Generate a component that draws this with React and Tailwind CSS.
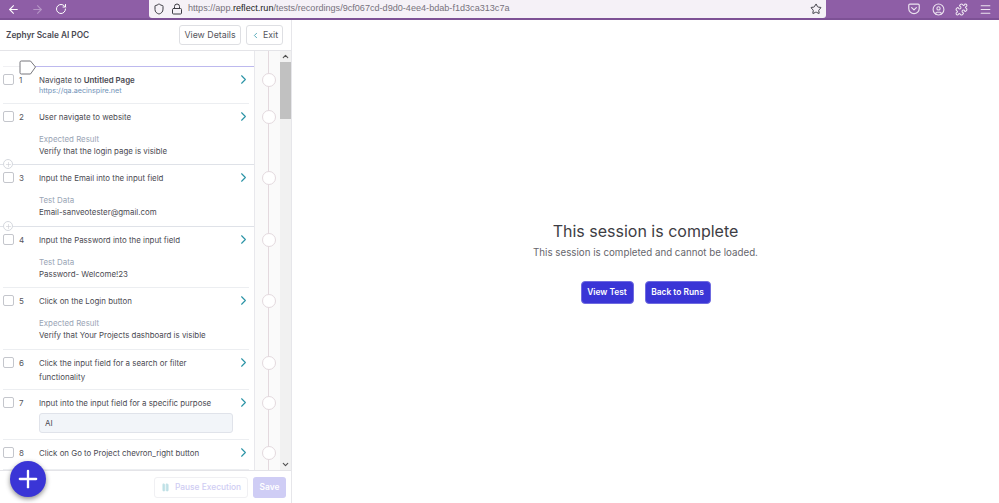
import React from 'react';
import { ArrowLeft, ArrowRight, RotateCw, Shield, Lock, Star, CircleUser, Puzzle, Menu, ChevronRight, ChevronLeft, ChevronUp, ChevronDown, Pause, Plus } from 'lucide-react';

const PocketIcon = () => (
  <svg width="14" height="14" viewBox="0 0 24 24" fill="none" stroke="currentColor" strokeWidth="2" strokeLinecap="round" strokeLinejoin="round">
    <path d="M3 5.5C3 4.4 3.9 3.5 5 3.5h14c1.1 0 2 .9 2 2V11a9 9 0 0 1-18 0z" />
    <path d="M8 9.5l4 4 4-4" />
  </svg>
);

const Timeline = ({ height }) => (
  <div className="relative w-[26px] shrink-0 bg-[#fafafa] border-l border-[#e8e8ec]">
    <div className="absolute left-[13px] top-0 bottom-0 w-px bg-[#e3d9de]" />
    <div className={`absolute left-[7px] ${height} w-[14px] h-[14px] rounded-full bg-white border border-[#e3d9de]`} />
  </div>
);

const Label = ({ title, value }) => (
  <div className="mt-[9px]">
    <div className="text-[7.9px] leading-[12px] text-[#9aa5b5]">{title}</div>
    <div className="text-[7.9px] leading-[12px] text-[#4a4a52]">{value}</div>
  </div>
);

const Step = ({ n, h, full, children }) => (
  <div className={`flex ${h}`}>
    <div className={`w-[254px] shrink-0 pl-[3px] ${full ? 'border-b border-[#dfe2e8]' : ''}`}>
      <div className={`h-full w-[246px] flex ${full ? '' : 'border-b border-[#eceef1]'}`}>
        <div className="w-[11px] h-[11px] mt-[7px] rounded-[2px] border border-[#c4c6cc] bg-white shrink-0" />
        <div className="w-[25px] pl-[5px] mt-[7px] text-[8px] leading-[12px] text-[#55555c] shrink-0">{n}</div>
        <div className="flex-1 min-w-0 pt-[7px]">{children}</div>
        <ChevronRight size={15} strokeWidth={1.75} className="text-[#2a93a6] mt-[5px] mr-[-2px] shrink-0" />
      </div>
    </div>
    <Timeline height="top-[6px]" />
  </div>
);

const StepTitle = ({ children }) => (
  <div className="text-[7.9px] leading-[14px] text-[#4a4a52] pr-[10px] mt-[-1px]">{children}</div>
);

const App = () => {
  return (
    <div className="relative h-[503px] w-[999px] overflow-hidden bg-white font-['Inter',sans-serif]">
      {/* browser bar */}
      <div className="h-[20px] flex items-start bg-[#8e5ea6] border-b-2 border-[#7d5195]">
        <div className="w-[149px] h-[18px] flex items-center pl-[7px] gap-[11px] text-white">
          <ArrowLeft size={13} />
          <ArrowRight size={13} className="text-[#b595c6]" />
          <RotateCw size={12} />
        </div>
        <div className="w-[677px] h-[18px] flex items-center bg-[#f5f1f7] rounded-b-[3px] pl-[4px] pr-[4px] text-[#3d3d44]">
          <Shield size={12} />
          <Lock size={12} className="ml-[6px]" />
          <div className="ml-[5px] flex-1 font-['Liberation_Sans',sans-serif] text-[9.1px] leading-none text-[#77727c] whitespace-nowrap">
            https://app.<span className="text-[#222]">reflect.run</span>/tests/recordings/9cf067cd-d9d0-4ee4-bdab-f1d3ca313c7a
          </div>
          <Star size={12} />
        </div>
        <div className="flex-1 h-[18px] flex items-center text-[#ece3f0] pl-[81px] gap-[10.5px]">
          <PocketIcon />
          <CircleUser size={13} />
          <Puzzle size={13} />
          <Menu size={13} />
        </div>
      </div>

      <div className="flex h-[483px]">
        {/* steps panel */}
        <div className="w-[292px] shrink-0 flex flex-col border-r border-[#e6e6ea]">
          <div className="h-[31px] shrink-0 flex items-center border-b border-[#e4e4e8] pl-[6px] pr-[8px]">
            <div className="flex-1 text-[8.3px] font-semibold text-[#4a4a52]">Zephyr Scale AI POC</div>
            <button className="h-[20px] w-[62px] rounded-[3px] border border-[#dedfe3] text-[8.8px] text-[#55555c]">View Details</button>
            <button className="h-[20px] w-[37px] ml-[5px] rounded-[3px] border border-[#dedfe3] text-[8.8px] text-[#55555c] flex items-center justify-center gap-[3px]">
              <ChevronLeft size={9} className="text-[#2a93a6]" />
              Exit
            </button>
          </div>

          <div className="flex flex-1 min-h-0">
            <div className="w-[280px] shrink-0 relative">
              <div className="h-[16px] flex">
                <div className="w-[254px] shrink-0" />
                <Timeline height="hidden" />
              </div>
              {/* start marker */}
              <div className="absolute left-[20px] top-[15px] w-[234px] h-px bg-[#bdb9ee]" />
              <div className="absolute left-[3px] top-[15px] w-[17px] h-px bg-[#f0f0f3]" />
              <svg className="absolute left-[19px] top-[9px]" width="18" height="15" viewBox="0 0 18 15" fill="none">
                <path d="M1 2.2C1 1.5 1.5 1 2.2 1h9.3l5 6-5 7H2.2C1.5 14 1 13.5 1 12.8z" fill="#fff" stroke="#77777c" />
              </svg>

              <Step n="1" h="h-[37px]">
                <StepTitle>Navigate to <span className="font-semibold">Untitled Page</span></StepTitle>
                <div className="text-[7.2px] leading-[9px] mt-[-1px] text-[#6f92b8]">https://qa.aecinspire.net</div>
              </Step>
              <Step n="2" h="h-[61px]" full>
                <StepTitle>User navigate to website</StepTitle>
                <Label title="Expected Result" value="Verify that the login page is visible" />
              </Step>
              <Step n="3" h="h-[62px]" full>
                <StepTitle>Input the Email into the input field</StepTitle>
                <Label title="Test Data" value="Email-sanveotester@gmail.com" />
              </Step>
              <Step n="4" h="h-[61px]">
                <StepTitle>Input the Password into the input field</StepTitle>
                <Label title="Test Data" value="Password- Welcome!23" />
              </Step>
              <Step n="5" h="h-[62px]">
                <StepTitle>Click on the Login button</StepTitle>
                <Label title="Expected Result" value="Verify that Your Projects dashboard is visible" />
              </Step>
              <Step n="6" h="h-[40px]">
                <StepTitle>Click the input field for a search or filter functionality</StepTitle>
              </Step>
              <Step n="7" h="h-[50px]">
                <StepTitle>Input into the input field for a specific purpose</StepTitle>
                <div className="mt-[3px] h-[20px] w-[194px] rounded-[3px] border border-[#e0e3ea] bg-[#f2f5f9] pl-[5px] text-[8px] leading-[18px] text-[#4a4a52]">AI</div>
              </Step>
              <Step n="8" h="h-[30px]">
                <StepTitle>Click on Go to Project chevron_right button</StepTitle>
              </Step>

              {/* add step buttons on dividers */}
              <div className="absolute left-[3px] top-[108px] w-[10px] h-[10px] rounded-full border border-[#d5d8de] bg-white flex items-center justify-center text-[#c9ccd3]">
                <Plus size={7} />
              </div>
              <div className="absolute left-[3px] top-[170px] w-[10px] h-[10px] rounded-full border border-[#d5d8de] bg-white flex items-center justify-center text-[#c9ccd3]">
                <Plus size={7} />
              </div>
            </div>

            {/* scrollbar */}
            <div className="w-[11px] shrink-0 bg-[#f1f1f1] flex flex-col items-center h-[419px]">
              <div className="h-[11px] flex items-center"><ChevronUp size={9} strokeWidth={3} className="text-[#505050]" /></div>
              <div className="w-full h-[57px] bg-[#c1c1c1]" />
              <div className="flex-1" />
              <div className="h-[11px] flex items-center"><ChevronDown size={9} strokeWidth={3} className="text-[#505050]" /></div>
            </div>
          </div>

          <div className="h-[33px] shrink-0 flex items-center justify-end border-t border-[#e4e4e8] pr-[5px] gap-[5px] bg-white">
            <button className="h-[21px] w-[94px] rounded-[3px] border border-[#f0f0f3] flex items-center justify-center gap-[5px] text-[8.4px] font-medium text-[#cfcdf3]">
              <Pause size={9} className="text-[#bfe0e6]" fill="#bfe0e6" />
              Pause Execution
            </button>
            <button className="h-[21px] w-[33px] rounded-[3px] bg-[#cfcdf5] text-white text-[8.4px] font-semibold">Save</button>
          </div>
        </div>

        {/* session message */}
        <div className="flex-1 flex flex-col items-center pt-[200px]">
          <div className="text-[16px] leading-[22px] text-[#3d3d44]">This session is complete</div>
          <div className="mt-[4px] text-[9.75px] leading-[14px] text-[#66666c]">This session is completed and cannot be loaded.</div>
          <div className="mt-[21px] flex gap-[11px]">
            <button className="h-[23px] w-[53px] rounded-[4px] bg-[#3a35d6] border border-[#6f6be0] text-white text-[8.4px] font-semibold">View Test</button>
            <button className="h-[23px] w-[66px] rounded-[4px] bg-[#3a35d6] border border-[#6f6be0] text-white text-[8.4px] font-semibold">Back to Runs</button>
          </div>
        </div>
      </div>

      {/* add step */}
      <button className="absolute left-[10px] top-[461px] w-[36px] h-[36px] rounded-full bg-[#3a35d6] shadow-[0_2px_5px_rgba(0,0,0,0.45)] flex items-center justify-center text-white">
        <Plus size={28} strokeWidth={2} />
      </button>
    </div>
  );
};

export default App;
